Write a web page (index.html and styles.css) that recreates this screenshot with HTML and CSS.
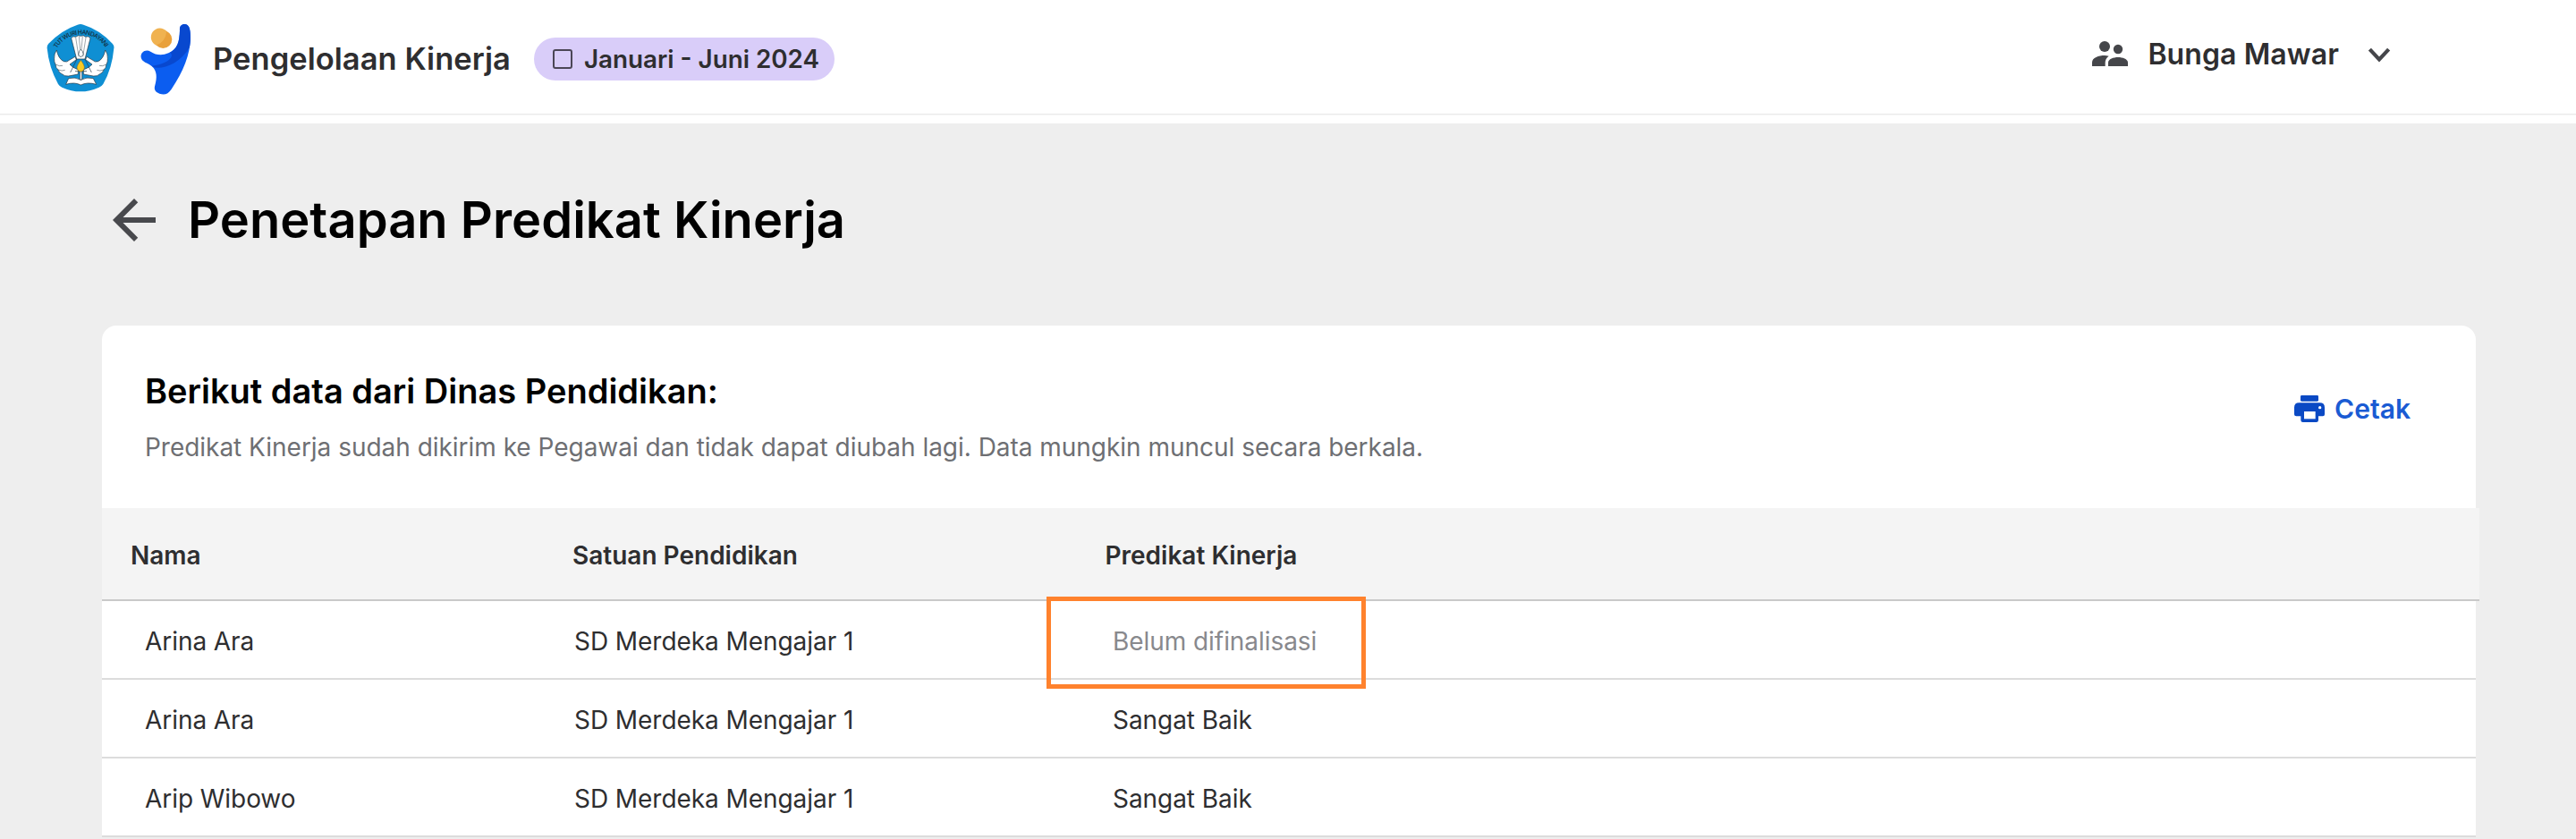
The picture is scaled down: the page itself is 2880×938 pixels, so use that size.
FILE: index.html
```html
<!DOCTYPE html>
<html lang="id">
<head>
<meta charset="utf-8">
<title>Penetapan Predikat Kinerja</title>
<link rel="stylesheet" href="styles.css">
</head>
<body>
<header class="topbar">
  <div class="brand">
    <svg class="brand-seal" viewBox="30 48 240 240" aria-label="Tut Wuri Handayani">
      <defs><path id="arc" d="M71 132A95 95 0 0 1 235 132"/></defs>
      <path fill="#0f8fd3" d="M140 53Q150 49 160 53Q215 70 257 116Q264 123 262 132Q256 200 226 252Q221 260 212 263Q150 291 88 263Q80 260 75 252Q44 195 38 132Q37 122 43 116Q88 70 140 53Z"/>
      <text class="seal-text"><textPath href="#arc" textLength="194">TUT WURI HANDAYANI</textPath></text>
      <g fill="#fff" stroke="#23343f" stroke-width="2" stroke-linejoin="round">
        <path d="M137 168L119 98Q125 89 134 94Q142 86 151 91Q160 86 167 94Q177 89 183 98L165 168Z"/>
        <path fill="none" stroke-width="1.3" d="M134 96L144 160M145 92L149 136M157 92L153 136M168 96L158 160"/>
        <path d="M70 138Q61 150 62 166Q61 178 66 186Q67 198 75 204Q78 215 88 218Q96 227 110 225L142 219L142 204Q122 196 114 186L136 170L132 160L112 172Q104 180 94 176Q76 168 70 138Z"/>
        <path d="M233 138Q242 150 241 166Q242 178 237 186Q236 198 228 204Q225 215 215 218Q207 227 193 225L160 219L160 204Q181 196 189 186L167 170L171 160L191 172Q199 180 209 176Q227 168 233 138Z"/>
        <path fill="none" stroke-width="1.5" d="M66 186Q80 194 90 190M75 204Q88 210 98 205M237 186Q223 194 213 190M228 204Q215 210 205 205"/>
        <path d="M110 233Q133 227 151 238Q170 227 193 233L203 253Q173 244 151 255Q130 244 101 253Z"/>
        <path d="M148 209H155V237H148ZM143 153Q145 140 151 135Q158 140 160 153L151 162Z"/>
        <path fill="none" d="M138 168L116 213M165 168L187 213M132 209H171"/>
      </g>
      <path fill="#f8c925" stroke="#8a6714" stroke-width="1.5" d="M151 172Q164 189 163 198Q160 210 151 210Q141 210 138 198Q138 189 151 172Z"/>
    </svg>
    <svg class="brand-figure" viewBox="348 42 180 252" aria-hidden="true">
      <circle cx="427" cy="102" r="30" fill="#e9a13c"/>
      <path fill="#f0b250" d="M439 75A30 30 0 1 0 404 122Q434 112 439 75Z"/>
      <path fill="#0b5df0" d="M353 163C350 144 370 133 385 143C403 155 424 157 445 148C475 135 482 110 483 72C482 57 489 51 499 51C514 51 519 66 519 97C518 151 495 211 455 269C444 286 431 289 415 284C399 279 396 268 400 256C407 231 407 208 390 193C374 180 356 179 353 163Z"/>
      <path fill="#0848cf" d="M388 191C408 207 478 193 516 128C518 116 519 108 519 97C519 66 514 51 499 51C489 51 482 57 483 72C482 110 475 135 450 146C466 155 450 184 388 191Z"/>
    </svg>
    <span class="brand-name">Pengelolaan Kinerja</span>
    <span class="period"><i class="period-box"></i>Januari - Juni 2024</span>
  </div>
  <div class="user">
    <svg class="user-icon" viewBox="90 78 120 84" fill="#45464a" aria-hidden="true">
      <circle cx="132" cy="96" r="18"/><circle cx="177" cy="105" r="15.5"/>
      <path d="M90 162V149C90 134 112 126 132 126Q138 126 146 128Q134 136 134 150V162Z"/>
      <path d="M144 162V150C144 138 162 132 177 132S210 138 210 150V162Z"/>
    </svg>
    <span class="user-name">Bunga Mawar</span>
    <svg class="user-chevron" viewBox="1014 98 72 48" aria-hidden="true"><path d="M1020 104L1050 136L1080 104" fill="none" stroke="#45464a" stroke-width="12"/></svg>
  </div>
</header>
<main class="page">
  <div class="page-head">
    <svg class="back" viewBox="0 0 24 24" aria-label="Kembali"><path fill="#48494d" d="M20 11H7.83l5.59-5.59L12 4l-8 8 8 8 1.41-1.41L7.83 13H20v-2z"/></svg>
    <h1 class="page-title">Penetapan Predikat Kinerja</h1>
  </div>
  <section class="card">
    <div class="card-head">
      <div>
        <h2 class="card-title">Berikut data dari Dinas Pendidikan:</h2>
        <p class="card-note">Predikat Kinerja sudah dikirim ke Pegawai dan tidak dapat diubah lagi. Data mungkin muncul secara berkala.</p>
      </div>
      <a class="print">
        <svg class="print-icon" viewBox="192 274 108 102" aria-hidden="true">
          <g fill="#0a49c4">
            <rect x="216" y="280" width="60" height="20" rx="4"/>
            <path d="M211 305H281Q297 305 297 321V344Q297 350 291 350H276V363Q276 370 269 370H224Q217 370 217 363V350H202Q195 350 195 344V321Q195 305 211 305Z"/>
          </g>
          <path fill="#fff" d="M228 334H266V359H228Z"/><circle cx="281" cy="321" r="5" fill="#fff"/>
        </svg>
        Cetak
      </a>
    </div>
    <div class="table">
      <div class="thead"><span>Nama</span><span>Satuan Pendidikan</span><span>Predikat Kinerja</span></div>
      <div class="row"><span>Arina Ara</span><span>SD Merdeka Mengajar 1</span><span class="pending">Belum difinalisasi</span><i class="highlight"></i></div>
      <div class="row"><span>Arina Ara</span><span>SD Merdeka Mengajar 1</span><span>Sangat Baik</span></div>
      <div class="row"><span>Arip Wibowo</span><span>SD Merdeka Mengajar 1</span><span>Sangat Baik</span></div>
    </div>
  </section>
</main>
</body>
</html>
```

FILE: styles.css
```css
* { box-sizing: border-box; }
html, body { margin: 0; height: 100%; overflow: hidden; }
body {
  background: #eee;
  color: #2e2e30;
  font-family: Inter, "Liberation Sans", sans-serif;
  font-size: 28px;
  white-space: nowrap;
}
h1, h2, p { margin: 0; }
svg { display: block; flex: none; }

.topbar {
  display: flex;
  justify-content: space-between;
  height: 138px;
  padding: 0 207px 0 50px;
  background: linear-gradient(#ebebeb, #ebebeb) 0 126.5px / 100% 1.5px no-repeat #fff;
}
.brand { display: flex; align-items: center; height: 108px; margin-top: 12px; }
.brand-seal { width: 80px; height: 80px; }
.seal-text { font: 600 21px "Open Sans", sans-serif; fill: #12303f; }
.brand-figure { width: 60px; height: 84px; margin-left: 26px; }
.brand-name { margin-left: 22px; font-size: 34.5px; font-weight: 600; line-height: 42px; letter-spacing: 0.04px; }
.period {
  display: flex;
  align-items: center;
  width: 336px;
  height: 48px;
  margin-left: 26px;
  padding-left: 21px;
  gap: 13px;
  border-radius: 24px;
  background: #d9cdf9;
  font-size: 27.8px;
  font-weight: 600;
}
.period-box { width: 22px; height: 22px; border: 2.5px solid #4b4656; border-radius: 3px; }

.user { display: flex; align-items: center; height: 108px; margin-top: 7px; }
.user-icon { width: 40px; height: 28px; margin-bottom: 2px; }
.user-name { margin-left: 22px; font-size: 32px; font-weight: 600; line-height: 40px; letter-spacing: 0.1px; }
.user-chevron { width: 26px; height: 17px; margin-left: 32px; }

.page { padding: 72px 112px 0 114px; }
.page-head { display: flex; align-items: center; height: 72px; }
.back { width: 72px; height: 72px; }
.page-title { margin-left: 24px; font-size: 56px; font-weight: 600; line-height: 72px; letter-spacing: 0.04px; color: #000; }

.card { margin-top: 82px; height: 572px; background: #fff; border-radius: 16px 16px 0 0; }
.card-head { display: flex; justify-content: space-between; height: 204px; padding: 50px 73px 0 48px; }
.card-title { font-size: 38px; font-weight: 600; line-height: 46px; color: #000; }
.card-note { margin-top: 23px; line-height: 34px; color: #6e6f73; letter-spacing: -0.026px; }
.print { display: flex; align-items: center; gap: 10px; height: 36px; margin-top: 25px; color: #1a5bd3; font-size: 30px; font-weight: 600; }
.print-icon { width: 36px; height: 34px; }

.thead, .row { display: grid; align-items: center; }
.thead {
  grid-template-columns: 494px 595.5px 1fr;
  width: calc(100% + 4px);
  height: 104px;
  padding: 3px 0 0 32px;
  border-bottom: 2px solid #c9c9c9;
  background: #f4f4f4;
  font-weight: 600;
}
.row {
  position: relative;
  grid-template-columns: 480px 602px 1fr;
  height: 88px;
  padding: 3px 0 0 48px;
  border-bottom: 2px solid #dcdcdc;
  letter-spacing: -0.06px;
}
.pending { color: #88898d; }
.highlight { position: absolute; left: 1056px; top: -5px; width: 357px; height: 103px; border: 5px solid #ff822d; z-index: 1; }
```
